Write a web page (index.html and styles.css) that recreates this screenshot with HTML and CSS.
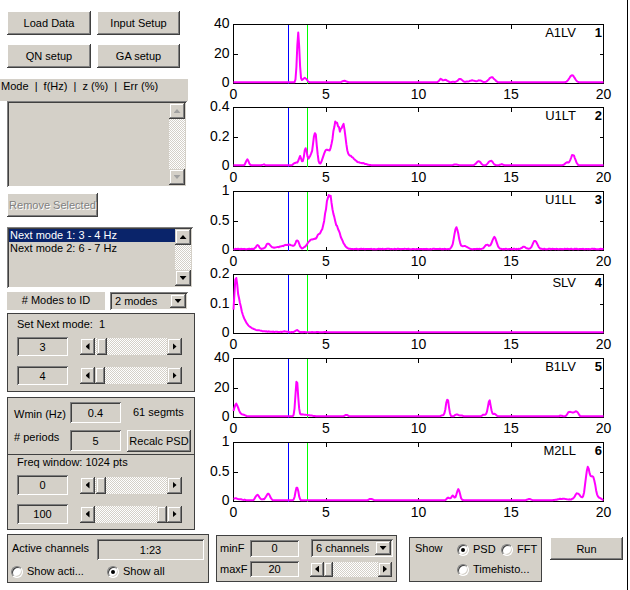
FILE: index.html
```html
<!DOCTYPE html>
<html>
<head>
<meta charset="utf-8">
<title>Modal identification</title>
<link rel="stylesheet" href="styles.css">
</head>
<body>
<div class="app">
  <div class="main">
    <div class="left">
      <div class="row r1"><button class="btn w84">Load Data</button><button class="btn w83">Input Setup</button></div>
      <div class="row r2"><button class="btn w84">QN setup</button><button class="btn w83">GA setup</button></div>
      <div class="list-head">Mode  |  f(Hz)  |  z (%)  |  Err (%)</div>
      <div class="listbox lb1">
        <div class="items"></div>
        <div class="vscroll disabled">
          <div class="sb-btn"><i class="tri up"></i></div>
          <div class="track"></div>
          <div class="sb-btn"><i class="tri down"></i></div>
        </div>
      </div>
      <button class="btn remove" disabled>Remove Selected</button>
      <div class="listbox lb2">
        <div class="items">
          <div class="item sel">Next mode 1: 3 - 4 Hz</div>
          <div class="item">Next mode 2: 6 - 7 Hz</div>
        </div>
        <div class="vscroll">
          <div class="sb-btn"><i class="tri up"></i></div>
          <div class="track"></div>
          <div class="sb-btn"><i class="tri down"></i></div>
        </div>
      </div>
      <div class="modes-row">
        <div class="label-box"># Modes to ID</div>
        <div class="popup p-modes"><span>2 modes</span><div class="drop"><i class="tri down"></i></div></div>
      </div>
      <div class="frame f1">
        <div class="title">Set Next mode:&nbsp; 1</div>
        <div class="srow a">
          <div class="edit w51">3</div>
          <div class="hslider"><div class="hs-btn"><i class="tri left"></i></div><div class="hs-track"><div class="thumb" style="margin-left:2px"></div></div><div class="hs-btn"><i class="tri right"></i></div></div>
        </div>
        <div class="srow b">
          <div class="edit w51">4</div>
          <div class="hslider"><div class="hs-btn"><i class="tri left"></i></div><div class="hs-track"><div class="thumb" style="margin-left:0px"></div></div><div class="hs-btn"><i class="tri right"></i></div></div>
        </div>
      </div>
      <div class="frame f2">
        <div class="wmin">
          <div class="wrow a">
            <span class="wl">Wmin (Hz)</span>
            <div class="edit w51 h21">0.4</div>
            <span class="seg">61 segmts</span>
          </div>
          <div class="wrow b">
            <span class="wl"># periods</span>
            <div class="edit w51 h21">5</div>
            <button class="btn recalc">Recalc PSD</button>
          </div>
        </div>
        <div class="freq">
          <div class="title">Freq window: 1024 pts</div>
          <div class="srow fa">
            <div class="edit w51 h20">0</div>
            <div class="hslider"><div class="hs-btn"><i class="tri left"></i></div><div class="hs-track"><div class="thumb" style="margin-left:1px"></div></div><div class="hs-btn"><i class="tri right"></i></div></div>
          </div>
          <div class="srow fb">
            <div class="edit w51 h20">100</div>
            <div class="hslider"><div class="hs-btn"><i class="tri left"></i></div><div class="hs-track end"><div class="thumb"></div></div><div class="hs-btn"><i class="tri right"></i></div></div>
          </div>
        </div>
      </div>
    </div>
    <svg id="plots" class="plots" width="428" height="530" viewBox="200 0 428 530" xmlns="http://www.w3.org/2000/svg"></svg>
  </div>
  <div class="bottom">
    <div class="frame active">
      <div class="act-row1"><span class="act-label">Active channels</span><div class="edit e-active">1:23</div></div>
      <div class="act-row2">
        <span class="opt o1"><span class="radio"></span>Show acti...</span>
        <span class="opt"><span class="radio on"></span>Show all</span>
      </div>
    </div>
    <div class="frame fpanel">
      <div class="fp-row fr1">
        <span class="fp-label">minF</span>
        <div class="edit e-f">0</div>
        <div class="popup p-ch"><span>6 channels</span><div class="drop"><i class="tri down"></i></div></div>
      </div>
      <div class="fp-row fr2">
        <span class="fp-label">maxF</span>
        <div class="edit e-f2">20</div>
        <div class="hslider s-ch"><div class="hs-btn"><i class="tri left"></i></div><div class="hs-track"><div class="thumb" style="margin-left:0px"></div></div><div class="hs-btn"><i class="tri right"></i></div></div>
      </div>
    </div>
    <div class="frame show">
      <span class="show-label">Show</span>
      <div class="show-opts">
        <div class="show-row"><span class="opt o-psd"><span class="radio on"></span>PSD</span><span class="opt"><span class="radio"></span>FFT</span></div>
        <div class="show-row sr2"><span class="opt"><span class="radio"></span>Timehisto...</span></div>
      </div>
    </div>
    <button class="btn run">Run</button>
  </div>
</div>
<script src="script.js"></script>
</body>
</html>
```

FILE: styles.css
```css
* { box-sizing: border-box; }
body {
  margin: 0;
  background: #fff;
  font-family: "Liberation Sans", Arial, sans-serif;
  font-size: 11px;
  color: #000;
}
.app {
  width: 628px;
  height: 590px;
  border-right: 1px solid #000;
}
.main { display: flex; height: 530px; }
.left { width: 200px; flex: none; }
.plots { display: block; flex: none; }

.btn {
  font: 11px "Liberation Sans", Arial, sans-serif;
  color: #000;
  background: #d4d0c8;
  border: none;
  padding: 0;
  height: 24px;
  display: block;
  box-shadow: inset -1px -1px #404040, inset 1px 1px #fff, inset -2px -2px #808080, inset 2px 2px #d4d0c8;
}
.row { display: flex; gap: 6px; margin-left: 7px; }
.r1 { margin-top: 11px; }
.r2 { margin-top: 9px; }
.w84 { width: 84px; }
.w83 { width: 83px; }

.list-head {
  margin-top: 11px;
  width: 188px;
  height: 22px;
  background: #d4d0c8;
  padding: 1px 0 0 1px;
  line-height: 13px;
  white-space: pre;
}

.listbox, .edit, .popup {
  background: #d4d0c8;
  box-shadow: inset 1px 1px #808080, inset -1px -1px #fff, inset 2px 2px #404040, inset -2px -2px #d4d0c8;
}
.listbox { display: flex; padding: 2px; margin-left: 7px; }
.lb1 { width: 180px; height: 86px; }
.lb2 { width: 186px; height: 61px; margin-top: 10px; }
.items { flex: 1; }
.item { height: 13px; line-height: 13px; padding-left: 1px; white-space: nowrap; }
.item.sel { background: #0a246a; color: #fff; }

.vscroll { width: 16px; flex: none; display: flex; flex-direction: column; }
.sb-btn, .hs-btn, .drop, .thumb {
  background: #d4d0c8;
  box-shadow: inset -1px -1px #404040, inset 1px 1px #d4d0c8, inset -2px -2px #808080, inset 2px 2px #fff;
}
.sb-btn { width: 16px; height: 16px; flex: none; display: flex; align-items: center; justify-content: center; }
.track, .hs-track {
  flex: 1;
  background-color: #d4d0c8;
  background-image: repeating-conic-gradient(#fff 0 25%, #d4d0c8 0 50%);
  background-size: 2px 2px;
}

.tri { display: block; background: #000; }
.tri.up { width: 7px; height: 4px; clip-path: polygon(50% 0, 100% 100%, 0 100%); }
.tri.down { width: 7px; height: 4px; clip-path: polygon(0 0, 100% 0, 50% 100%); }
.tri.left { width: 4px; height: 7px; clip-path: polygon(0 50%, 100% 0, 100% 100%); }
.tri.right { width: 4px; height: 7px; clip-path: polygon(0 0, 100% 50%, 0 100%); }
.disabled .tri { background: #a0a0a0; }

.remove {
  margin: 6px 0 0 7px;
  width: 91px;
  color: #808080;
  text-shadow: 1px 1px #fff;
}

.modes-row { display: flex; gap: 5px; margin: 4px 0 0 7px; height: 18px; }
.label-box {
  width: 98px;
  background: #d4d0c8;
  text-align: center;
  line-height: 17px;
}
.popup { display: flex; align-items: center; padding: 2px; }
.popup span { flex: 1; padding-left: 3px; white-space: nowrap; }
.p-modes { width: 78px; }
.drop { width: 16px; height: 100%; flex: none; display: flex; align-items: center; justify-content: center; }

.frame { background: #d4d0c8; border: 1px solid #404040; }
.title { height: 13px; line-height: 13px; white-space: nowrap; }
.f1 { margin: 3px 0 0 7px; width: 188px; height: 79px; padding: 4px 0 0 9px; }
.srow { display: flex; align-items: center; gap: 12px; height: 19px; }
.f1 .srow.a { margin-top: 6px; }
.f1 .srow.b { margin-top: 10px; }
.edit { display: flex; align-items: center; justify-content: center; }
.w51 { width: 51px; height: 19px; }
.h20 { height: 20px; }
.h21 { height: 21px; }

.hslider { display: flex; width: 102px; height: 17px; }
.hs-btn { width: 15px; flex: none; display: flex; align-items: center; justify-content: center; }
.hs-track { display: flex; }
.hs-track.end { justify-content: flex-end; }
.thumb { width: 10px; height: 100%; flex: none; }

.f2 { margin: 5px 0 0 7px; width: 188px; height: 133px; }
.wmin { height: 56px; padding-left: 6px; }
.wrow { display: flex; align-items: flex-start; }
.wrow.a { padding-top: 4px; }
.wrow.b { margin-top: 7px; }
.wl { width: 56px; line-height: 13px; flex: none; white-space: nowrap; }
.wrow.a .wl { margin-top: 6px; }
.wrow.b .wl { margin-top: 1px; }
.seg { margin: 4px 0 0 12px; line-height: 13px; white-space: nowrap; }
.recalc { margin-left: 6px; width: 64px; height: 22px; }
.freq { border-top: 1px solid #404040; height: 75px; padding: 1px 0 0 9px; }
.srow.fa { margin-top: 6px; height: 20px; }
.srow.fb { margin-top: 9px; height: 20px; }

.bottom { display: flex; align-items: flex-start; }
.active { margin: 4px 0 0 7px; width: 202px; height: 49px; padding-left: 3px; }
.act-row1 { display: flex; align-items: flex-start; height: 25px; }
.act-label { margin: 7px 0 0 1px; width: 85px; line-height: 13px; flex: none; }
.e-active { margin-top: 4px; width: 107px; height: 21px; }
.act-row2 { display: flex; align-items: center; margin-top: 5px; height: 13px; }
.opt { display: flex; align-items: center; gap: 4px; line-height: 13px; white-space: nowrap; }
.o1 { width: 96px; }
.radio {
  width: 12px;
  height: 12px;
  border-radius: 50%;
  flex: none;
  background: #fff;
  border: 1px solid;
  border-color: #808080 #fff #fff #808080;
  box-shadow: inset 1px 1px #404040, inset -1px -1px #d4d0c8;
  display: flex;
  align-items: center;
  justify-content: center;
}
.radio.on::after {
  content: "";
  width: 4px;
  height: 4px;
  border-radius: 50%;
  background: #000;
}

.fpanel { margin: 5px 0 0 7px; width: 181px; height: 47px; padding-left: 3px; }
.fp-row { display: flex; align-items: center; }
.fr1 { margin-top: 3px; height: 18px; }
.fr2 { margin-top: 4px; height: 16px; }
.fp-label { width: 30px; flex: none; }
.e-f { width: 49px; height: 17px; }
.e-f2 { width: 49px; height: 16px; }
.p-ch { margin-left: 12px; width: 82px; height: 18px; }
.s-ch { margin-left: 11px; width: 82px; height: 15px; }
.s-ch .hs-btn { width: 14px; }
.s-ch .thumb { width: 9px; }

.show { margin: 7px 0 0 12px; width: 133px; height: 45px; display: flex; padding-left: 5px; }
.show-label { width: 42px; margin-top: 4px; line-height: 13px; flex: none; }
.show-opts { margin-top: 5px; }
.show-row { display: flex; height: 13px; align-items: center; }
.show-row.sr2 { margin-top: 7px; }
.o-psd { width: 44px; }

.run { margin: 7px 0 0 8px; width: 73px; height: 23px; }

.plots text { font-family: "Liberation Sans", Arial, sans-serif; }
```

FILE: script.js
```js
(function () {
  var NS = 'http://www.w3.org/2000/svg';
  var svg = document.getElementById('plots');
  function el(tag, attrs, text) {
    var e = document.createElementNS(NS, tag);
    for (var k in attrs) e.setAttribute(k, attrs[k]);
    if (text !== undefined) e.textContent = text;
    svg.appendChild(e);
    return e;
  }
  var seed = 11;
  function rnd() { seed = (seed * 16807) % 2147483647; return seed / 2147483647; }

  var L = 233.5, R = 603.5, W = 370, H = 59;
  var tops = [24, 107, 191, 274, 358, 442];

  var plots = [
    { name: 'A1LV', num: '1', ymax: 40, labels: ['0', '20', '40'], base: 0.45, noise: 0.25,
      peaks: [[3.5, 34, 0.065], [3.85, 3.2, 0.12], [6.0, 1.2, 0.12], [11.2, 2.2, 0.08], [11.45, 1.5, 0.1],
        [12.25, 2.0, 0.1], [12.9, 1.0, 0.12], [13.3, 1.2, 0.1], [13.96, 3.5, 0.15], [12.5, 0.6, 0.9], [18.3, 5, 0.15]] },
    { name: 'U1LT', num: '2', ymax: 0.4, labels: ['0', '0.2', '0.4'], base: 0.004, noise: 0.004,
      peaks: [[0.75, 0.04, 0.08], [1.65, 0.008, 0.08], [3.35, 0.02, 0.1], [3.6, 0.06, 0.08], [3.9, 0.12, 0.08],
        [4.15, 0.06, 0.08], [4.4, 0.23, 0.1], [5.0, 0.1, 0.15], [5.55, 0.3, 0.2], [5.95, 0.22, 0.12], [6.3, 0.06, 0.2],
        [6.8, 0.02, 0.3], [12.0, 0.01, 0.1], [13.25, 0.03, 0.12], [13.9, 0.035, 0.12], [14.5, 0.01, 0.1],
        [18.0, 0.02, 0.1], [18.35, 0.075, 0.12]] },
    { name: 'U1LL', num: '3', ymax: 1, labels: ['0', '0.5', '1'], base: 0.02, noise: 0.01,
      peaks: [[1.3, 0.07, 0.08], [1.87, 0.09, 0.1], [2.5, 0.03, 0.4], [3.0, 0.06, 0.25], [3.45, 0.13, 0.1],
        [4.2, 0.15, 0.2], [4.7, 0.25, 0.2], [5.15, 0.82, 0.18], [5.55, 0.35, 0.25], [12.05, 0.36, 0.12],
        [12.5, 0.05, 0.15], [13.7, 0.07, 0.12], [14.1, 0.2, 0.12], [15.7, 0.04, 0.1], [16.3, 0.14, 0.12]] },
    { name: 'SLV', num: '4', ymax: 0.2, labels: ['0', '0.1', '0.2'], base: 0.003, noise: 0.0015,
      custom: function (f) {
        var v = f < 0.12 ? (0.067 + 1.083 * f) : 0.197 * Math.exp(-(f - 0.12) / 0.3);
        return v + 0.008 * Math.exp(-f / 1.5);
      },
      peaks: [[3.42, 0.007, 0.08], [2.8, 0.002, 0.1]] },
    { name: 'B1LV', num: '5', ymax: 40, labels: ['0', '20', '40'], base: 0.35, noise: 0.25,
      peaks: [[0.15, 8.5, 0.12], [0.5, 1.5, 0.15], [3.42, 25, 0.07], [3.75, 1.5, 0.2], [4.2, 0.8, 0.2],
        [6.1, 1.2, 0.1], [11.3, 1.0, 0.1], [11.56, 12, 0.08], [12.06, 1.5, 0.1], [12.3, 0.8, 0.1],
        [13.55, 1.5, 0.1], [13.83, 11, 0.08], [14.1, 2, 0.1], [17.7, 0.8, 0.1], [18.15, 3.2, 0.1],
        [18.35, 2, 0.1], [18.55, 3.3, 0.1]] },
    { name: 'M2LL', num: '6', ymax: 1, labels: ['0', '0.5', '1'], base: 0.012, noise: 0.008,
      peaks: [[0.1, 0.035, 0.15], [0.5, 0.015, 0.2], [1.29, 0.1, 0.1], [1.6, 0.02, 0.1], [1.88, 0.12, 0.1],
        [3.43, 0.23, 0.08], [7.43, 0.03, 0.1], [11.6, 0.05, 0.08], [11.85, 0.08, 0.08], [12.15, 0.19, 0.09],
        [16.0, 0.025, 0.12], [17.8, 0.03, 0.3], [18.6, 0.12, 0.15], [19.15, 0.55, 0.12], [19.45, 0.38, 0.12],
        [19.8, 0.04, 0.1]] }
  ];

  plots.forEach(function (p, i) {
    var t = tops[i] + 0.5, b = t + H;
    el('rect', { x: L, y: t, width: W, height: H, fill: '#fff', stroke: '#000', 'stroke-width': 1, 'shape-rendering': 'crispEdges' });
    var d = '';
    [0, 5, 10, 15, 20].forEach(function (f) {
      var x = L + f * W / 20;
      d += 'M' + x + ' ' + b + 'v-4M' + x + ' ' + t + 'v4';
      el('text', { x: x, y: b + 15.5, 'font-size': 14, 'text-anchor': 'middle', fill: '#000' }, String(f));
    });
    [0, 0.5, 1].forEach(function (k, j) {
      var y = b - k * H;
      d += 'M' + L + ' ' + y + 'h4M' + R + ' ' + y + 'h-4';
      el('text', { x: 229.5, y: y + 3.5, 'font-size': 14, 'text-anchor': 'end', fill: '#000' }, p.labels[j]);
    });
    el('path', { d: d, stroke: '#000', fill: 'none', 'shape-rendering': 'crispEdges' });
    el('line', { x1: 288.5, y1: t, x2: 288.5, y2: b, stroke: '#0000ff', 'shape-rendering': 'crispEdges' });
    el('line', { x1: 307.5, y1: t, x2: 307.5, y2: b, stroke: '#00ff00', 'shape-rendering': 'crispEdges' });

    var pts = [];
    for (var n = 0; n <= 400; n++) {
      var f = n * 0.05;
      var v = p.base;
      p.peaks.forEach(function (pk) {
        var z = (f - pk[0]) / pk[2];
        v += pk[1] * Math.exp(-0.5 * z * z);
      });
      if (p.custom) v += p.custom(f);
      v = v * (1 + 0.08 * (rnd() - 0.5)) + p.noise * rnd();
      var y = b - v / p.ymax * H;
      if (y > b - 1.2) y = b - 1.2;
      if (y < t + 0.5) y = t + 0.5;
      pts.push((L + f * W / 20).toFixed(2) + ',' + y.toFixed(2));
    }
    el('polyline', { points: pts.join(' '), fill: 'none', stroke: '#ff00ff', 'stroke-width': 2, 'stroke-linejoin': 'round' });

    el('text', { x: 576, y: t + 12.8, 'font-size': 13, 'text-anchor': 'end', fill: '#000' }, p.name);
    el('text', { x: 602, y: t + 12.8, 'font-size': 13, 'font-weight': 'bold', 'text-anchor': 'end', fill: '#000' }, p.num);
  });
})();
```
